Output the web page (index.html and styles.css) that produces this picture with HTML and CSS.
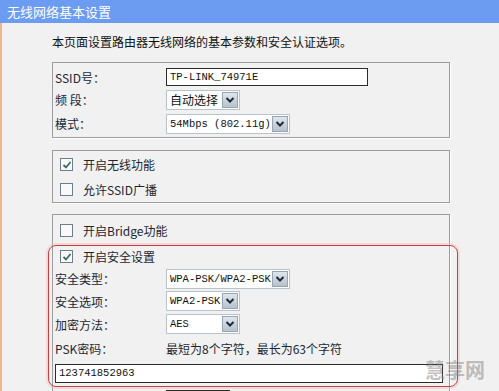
FILE: index.html
```html
<!DOCTYPE html>
<html lang="zh-CN">
<head>
    <meta charset="UTF-8">
    <title>无线网络基本设置</title>
    <link rel="stylesheet" href="styles.css">
</head>
<body>
    <div class="titlebar">无线网络基本设置</div>

    <div class="main">
        <p class="desc">本页面设置路由器无线网络的基本参数和安全认证选项。</p>

        <div class="box box-basic">
            <div class="row r1">
                <span class="label">SSID号：</span>
                <div class="input ssid">TP-LINK_74971E</div>
            </div>
            <div class="row r2">
                <span class="label">频&nbsp;段：</span>
                <div class="select short"><span class="val cn">自动选择</span><span class="arrow"><svg width="10" height="8" viewBox="0 0 10 8"><path d="M1.5 2 L5 5.5 L8.5 2" fill="none" stroke="#1f2a36" stroke-width="2"/></svg></span></div>
            </div>
            <div class="row r3">
                <span class="label">模式：</span>
                <div class="select wide"><span class="val">54Mbps (802.11g)</span><span class="arrow"><svg width="10" height="8" viewBox="0 0 10 8"><path d="M1.5 2 L5 5.5 L8.5 2" fill="none" stroke="#1f2a36" stroke-width="2"/></svg></span></div>
            </div>
        </div>

        <div class="box box-switch">
            <div class="row check-row">
                <span class="check on"><svg width="10" height="10" viewBox="0 0 10 10"><path d="M1.5 5 L4 7.5 L8.5 2" fill="none" stroke="#3d6b5c" stroke-width="1.8"/></svg></span>
                <span>开启无线功能</span>
            </div>
            <div class="row check-row">
                <span class="check"></span>
                <span>允许SSID广播</span>
            </div>
        </div>

        <div class="box box-security">
            <div class="row check-row bridge">
                <span class="check"></span>
                <span>开启Bridge功能</span>
            </div>

            <div class="highlight">
                <div class="row check-row s0">
                    <span class="check on"><svg width="10" height="10" viewBox="0 0 10 10"><path d="M1.5 5 L4 7.5 L8.5 2" fill="none" stroke="#3d6b5c" stroke-width="1.8"/></svg></span>
                    <span>开启安全设置</span>
                </div>
                <div class="row s1">
                    <span class="label">安全类型：</span>
                    <div class="select wide"><span class="val">WPA-PSK/WPA2-PSK</span><span class="arrow"><svg width="10" height="8" viewBox="0 0 10 8"><path d="M1.5 2 L5 5.5 L8.5 2" fill="none" stroke="#1f2a36" stroke-width="2"/></svg></span></div>
                </div>
                <div class="row s2">
                    <span class="label">安全选项：</span>
                    <div class="select short"><span class="val">WPA2-PSK</span><span class="arrow"><svg width="10" height="8" viewBox="0 0 10 8"><path d="M1.5 2 L5 5.5 L8.5 2" fill="none" stroke="#1f2a36" stroke-width="2"/></svg></span></div>
                </div>
                <div class="row s3">
                    <span class="label">加密方法：</span>
                    <div class="select short"><span class="val">AES</span><span class="arrow"><svg width="10" height="8" viewBox="0 0 10 8"><path d="M1.5 2 L5 5.5 L8.5 2" fill="none" stroke="#1f2a36" stroke-width="2"/></svg></span></div>
                </div>
                <div class="row s4">
                    <span class="label">PSK密码：</span>
                    <span class="hint">最短为8个字符，最长为63个字符</span>
                </div>
                <div class="input psk">123741852963</div>
            </div>

            <div class="row s5">
                <span class="label"></span>
                <div class="input period"></div>
            </div>
        </div>
    </div>

    <div class="watermark">慧享网</div>
</body>
</html>
```

FILE: styles.css
```css
html {
    overflow: hidden;
}

body {
    margin: 0;
    position: relative;
    background: #f1f1f1;
    font-family: "Noto Sans CJK SC", "DejaVu Sans", sans-serif;
    font-size: 12px;
    color: #1c2733;
}

.titlebar {
    height: 23px;
    line-height: 23px;
    padding-left: 7px;
    background: #6b9cf2;
    color: #fff;
    font-size: 13px;
}

.main {
    border-left: 2px solid #ecb88c;
    padding-left: 50px;
    height: 380px;
}

.desc {
    margin: 0;
    padding-top: 10px;
    height: 29px;
    line-height: 18px;
    font-size: 12px;
    color: #111;
}

.box {
    width: 396px;
    border: 1px solid #9d9d9d;
    box-shadow: 1px 1px 0 #fff;
}

.box-basic {
    padding: 3px 0 1px 2px;
    width: 394px;
    margin-bottom: 12px;
}

.box-switch {
    padding-top: 1px;
    margin-bottom: 11px;
}

.box-security {
    padding-top: 3px;
    height: 200px;
}

.row {
    display: flex;
    align-items: center;
    height: 23px;
}

.r1 { height: 22px; }
.r2 { height: 23px; }
.r3 { height: 25px; }

.check-row {
    height: 25px;
    padding-left: 7px;
}

.bridge {
    height: 24px;
}

.label {
    width: 111px;
    flex-shrink: 0;
    white-space: nowrap;
}

.check {
    width: 11px;
    height: 11px;
    border: 1px solid #6e7d8b;
    background: #f9f9f9;
    margin-right: 10px;
    display: flex;
    align-items: center;
    justify-content: center;
}

.input {
    box-sizing: border-box;
    height: 18px;
    line-height: 16px;
    border: 1px solid #2b2b2b;
    background: #fff;
    padding-left: 3px;
    font-family: "Liberation Mono", monospace;
    font-size: 10.5px;
    color: #111;
}

.ssid {
    width: 202px;
}

.select {
    box-sizing: border-box;
    display: flex;
    align-items: center;
    height: 20px;
    border: 1px solid #b9c3cc;
    background: #fff;
    font-family: "Liberation Mono", monospace;
    font-size: 10.5px;
    color: #111;
}

.select .val {
    flex: 1;
    padding-left: 3px;
    white-space: nowrap;
    overflow: hidden;
}

.select .cn {
    font-family: "Noto Sans CJK SC", sans-serif;
    font-size: 12px;
}

.select .arrow {
    width: 16px;
    height: 16px;
    margin-right: 1px;
    border: 1px solid #98a6b4;
    box-sizing: border-box;
    background: linear-gradient(#dfe5ec, #b7c2ce);
    display: flex;
    align-items: center;
    justify-content: center;
}

.short {
    width: 74px;
}

.wide {
    width: 124px;
}

.highlight {
    margin: 3px -9px 0 -5px;
    padding: 0 0 3px 6px;
    border: 1px solid #c8403f;
    border-radius: 8px;
    box-shadow: 0 0 0 2px rgba(244, 190, 190, 0.45);
}

.s0 {
    height: 21px;
    padding-left: 5px;
}

.s1 { height: 23px; }
.s2 { height: 22px; }
.s3 { height: 24px; }
.s4 { height: 24px; }

.hint {
    color: #1c2733;
}

.psk {
    width: 388px;
    margin-top: 4px;
    height: 19px;
}

.s5 {
    margin-top: 1px;
    padding-left: 2px;
    align-items: flex-start;
    padding-top: 2px;
}

.period {
    width: 64px;
    height: 20px;
}

.watermark {
    position: absolute;
    left: 425px;
    top: 355px;
    font-size: 20px;
    font-weight: bold;
    color: rgba(140, 140, 140, 0.55);
}
```
